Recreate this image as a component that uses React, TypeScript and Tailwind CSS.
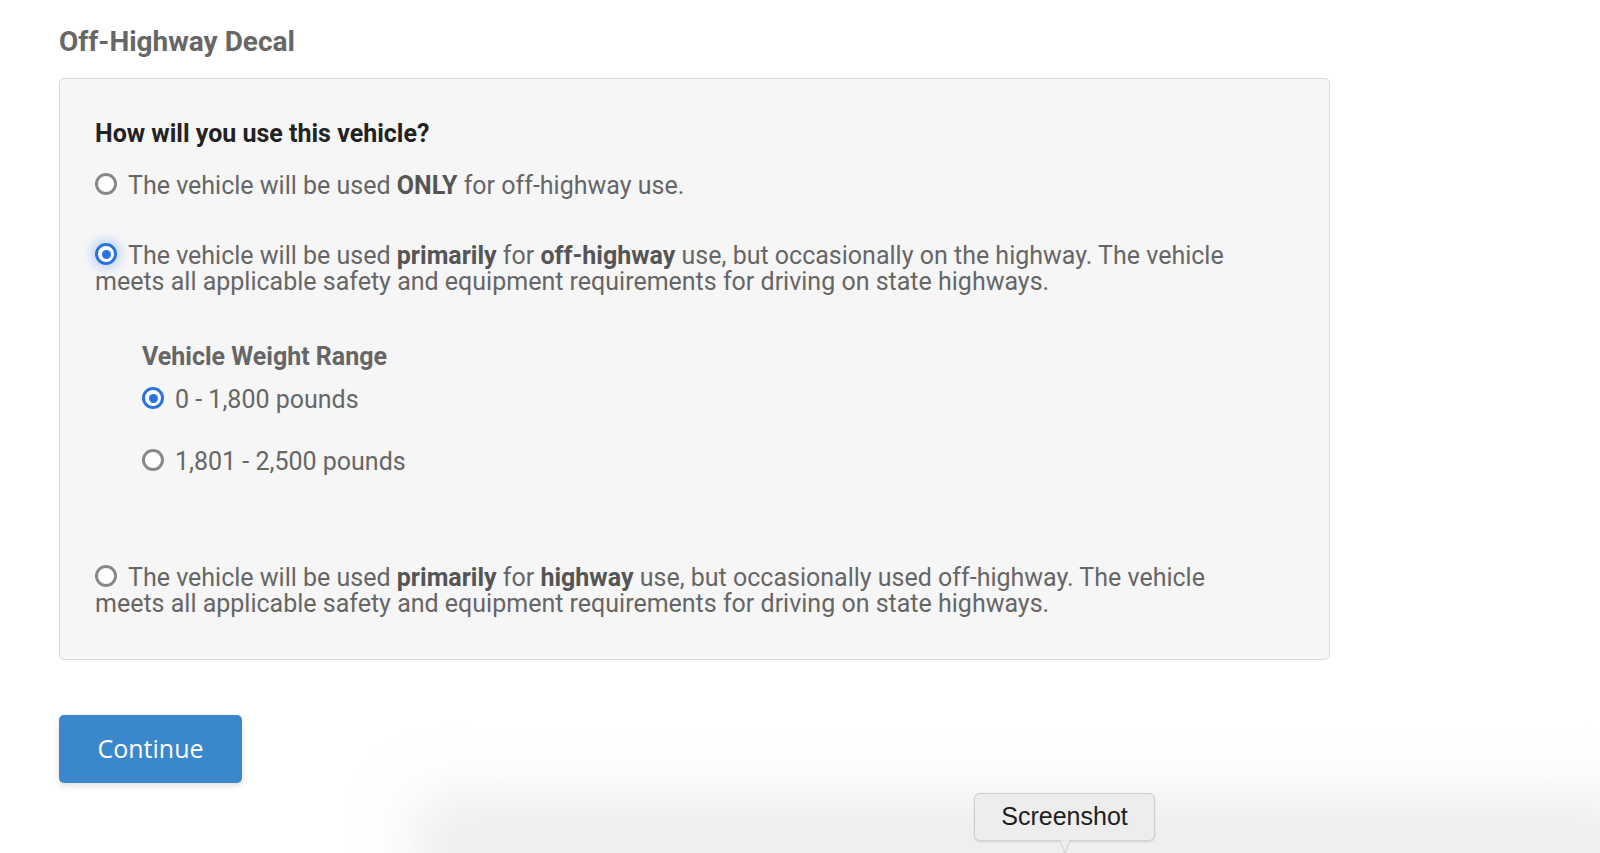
import { useState } from "react"

function Radio({ checked, focused }: { checked?: boolean; focused?: boolean }) {
    return (
        <span
            className={`relative top-[0px] inline-flex align-top items-center justify-center w-[22px] h-[22px] rounded-full border-[3px] bg-white mr-[11px] ${checked ? "border-[#2a72e0]" : "border-[#88888c]"} ${focused ? "shadow-[0_0_8px_5px_rgba(90,150,240,0.28)]" : ""}`}
        >
            {checked && <span className="w-[9px] h-[9px] rounded-full bg-[#2a72e0]" />}
        </span>
    )
}

function Option({ checked, focused, children }: { checked?: boolean; focused?: boolean; children: React.ReactNode }) {
    return (
        <label className="block text-[25px] leading-[26px] text-[#666]">
            <Radio checked={checked} focused={focused} />
            {children}
        </label>
    )
}

export default function App() {
    const [use] = useState("primary-off")
    const [weight] = useState("light")

    return (
        <div className="relative min-h-screen overflow-hidden bg-white font-['Roboto',sans-serif]">
            <div className="flex w-[1330px] flex-col items-stretch pl-[59px] pt-[24px]">
                <h2 className="text-[28px] leading-[36px] font-bold text-[#676767]">Off-Highway Decal</h2>

                <div className="mt-[18px] flex flex-col rounded-[5px] border border-[#dadada] bg-[#f6f6f6] pl-[35px] pr-[60px] pt-[41px] pb-[42px]">
                    <p className="mb-[25px] text-[25px] leading-[28px] font-bold text-[#222]">How will you use this vehicle?</p>

                    <div className="flex flex-col gap-[44px]">
                        <Option checked={use === "only-off"}>
                            The vehicle will be used <b className="text-[#555]">ONLY</b> for off-highway use.
                        </Option>

                        <Option checked={use === "primary-off"} focused>
                            The vehicle will be used <b className="text-[#555]">primarily</b> for <b className="text-[#555]">off-highway</b> use, but occasionally on the highway. The vehicle meets all applicable safety and equipment requirements for driving on state highways.
                        </Option>
                    </div>

                    <div className="mt-[48px] mb-[90px] flex flex-col pl-[47px]">
                        <p className="mb-[16px] text-[25px] leading-[28px] font-bold text-[#666]">Vehicle Weight Range</p>
                        <div className="flex flex-col gap-[36px]">
                            <Option checked={weight === "light"}>0 - 1,800 pounds</Option>
                            <Option checked={weight === "heavy"}>1,801 - 2,500 pounds</Option>
                        </div>
                    </div>

                    <Option checked={use === "primary-hwy"}>
                        The vehicle will be used <b className="text-[#555]">primarily</b> for <b className="text-[#555]">highway</b> use, but occasionally used off-highway. The vehicle meets all applicable safety and equipment requirements for driving on state highways.
                    </Option>
                </div>

                <div className="mt-[55px]">
                    <button className="h-[68px] w-[183px] rounded-[5px] bg-[#3a87cb] font-['Open_Sans',sans-serif] text-[25px] text-white shadow-[0_3px_6px_rgba(0,0,0,0.12)]">
                        Continue
                    </button>
                </div>
            </div>

            {/* dock shadow at the bottom edge */}
            <div className="absolute bottom-[-40px] left-[410px] right-[-40px] h-[100px] rounded-[40px] bg-[#eeeeee] blur-[28px]" />

            <div className="absolute left-[974px] top-[793px] flex flex-col items-center">
                <div className="flex h-[48px] w-[181px] items-center justify-center rounded-[6px] border border-[#cfcfcf] bg-[#ededed] font-['Liberation_Sans',sans-serif] text-[25px] text-[#1e1e1e] shadow-[0_1px_2px_rgba(0,0,0,0.12)]">
                    Screenshot
                </div>
                <svg width="26" height="14" viewBox="0 0 26 14" className="-mt-px">
                    <path d="M8 0.5 L13 13.5 L18 0.5" fill="#ededed" stroke="#cfcfcf" strokeWidth="1" />
                    <rect x="8.5" y="-1" width="9" height="1.5" fill="#ededed" />
                </svg>
            </div>
        </div>
    )
}
